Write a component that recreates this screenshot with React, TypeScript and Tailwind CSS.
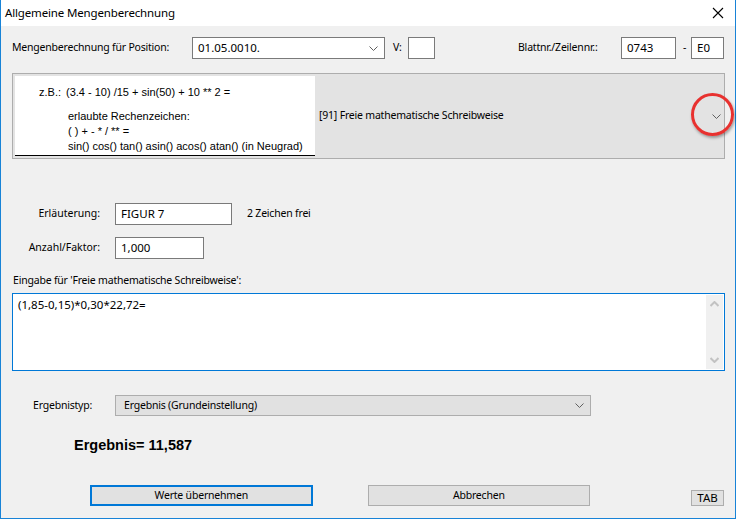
import React from 'react';

function Chevron({ className = '' }: { className?: string }) {
  return (
    <svg width="9" height="5" viewBox="0 0 9 5" className={className}>
      <polyline points="0.5,0.5 4.5,4.5 8.5,0.5" fill="none" stroke="#606060" strokeWidth="1" />
    </svg>
  );
}

function ScrollArrow({ up }: { up?: boolean }) {
  return (
    <svg width="9" height="6" viewBox="0 0 9 6">
      <polyline
        points={up ? '0.5,5 4.5,1 8.5,5' : '0.5,1 4.5,5 8.5,1'}
        fill="none"
        stroke="#c2c2c2"
        strokeWidth="2"
      />
    </svg>
  );
}

function TextBox({ value = '', className = '' }: { value?: string; className?: string }) {
  return (
    <div className={`h-[22px] bg-white border border-[#7a7a7a] pl-[5px] pt-[1px] leading-[18px] text-[11.5px] tracking-normal ${className}`}>
      {value}
    </div>
  );
}

export default function App() {
  return (
    <div className="w-[737px] h-[520px] bg-white font-['Noto_Sans',sans-serif] text-[10.5px] tracking-[-0.2px] text-black">
      <div className="relative w-[736px] h-[519px] border-x border-b border-[#1883d7] flex flex-col">
        {/* Title bar */}
        <div className="h-[26px] bg-white flex items-center justify-between pl-[4px] pr-[11px]">
          <span className="text-[11.5px] tracking-[-0.15px] leading-none">Allgemeine Mengenberechnung</span>
          <svg width="12" height="12" viewBox="0 0 12 12">
            <path d="M1 1 L11 11 M11 1 L1 11" stroke="#000" strokeWidth="1.1" />
          </svg>
        </div>

        {/* Body */}
        <div className="flex-1 bg-[#f0f0f0] px-[11px] flex flex-col">
          {/* Position row */}
          <div className="mt-[11px] h-[22px] flex items-center">
            <span className="w-[180px]">Mengenberechnung für Position:</span>
            <div className="w-[193px] h-[22px] bg-white border border-[#7a7a7a] flex items-center justify-between pl-[5px] pr-[6px] text-[11.5px] tracking-normal">
              <span>01.05.0010.</span>
              <Chevron />
            </div>
            <span className="ml-[8px] w-[15px]">V:</span>
            <TextBox className="w-[27px]" />
            <span className="ml-[83px] w-[103px]">Blattnr./Zeilennr.:</span>
            <TextBox value="0743" className="w-[55px]" />
            <span className="ml-[7px] w-[8px]">-</span>
            <TextBox value="E0" className="w-[33px]" />
          </div>

          {/* Method panel */}
          <div className="relative mt-[14px] h-[86px] w-[713px] border border-[#adadad] bg-[#e3e3e3] p-[2px] flex items-stretch">
            <div className="w-[300px] bg-white border-b border-black pt-[9px] font-['Liberation_Sans',Arial,sans-serif] text-[11px] tracking-normal leading-[14px]">
              <div className="flex">
                <span className="w-[51px] shrink-0 text-right pr-[5px]">z.B.:</span>
                <span>(3.4 - 10) /15 + sin(50) + 10 ** 2 =</span>
              </div>
              <div className="pl-[53px] mt-[10px]">
                <div>erlaubte Rechenzeichen:</div>
                <div className="mt-[1px]">( ) + - * / ** =</div>
                <div className="mt-[1px]">sin() cos() tan() asin() acos() atan() (in Neugrad)</div>
              </div>
            </div>
            <div className="flex-1 flex items-center justify-between pl-[4px] pr-[1px]">
              <span>[91] Freie mathematische Schreibweise</span>
              <Chevron />
            </div>
            <div className="absolute left-[678px] top-[19px] w-[43px] h-[43px] rounded-full border-[3px] border-[#e8312f] shadow-[1px_2px_3px_rgba(0,0,0,0.35)]" />
          </div>

          {/* Erläuterung */}
          <div className="mt-[44px] h-[22px] flex items-center">
            <span className="w-[103px] text-right pr-[15px] tracking-normal">Erläuterung:</span>
            <TextBox value="FIGUR 7" className="w-[117px]" />
            <span className="ml-[15px]">2 Zeichen frei</span>
          </div>

          {/* Anzahl */}
          <div className="mt-[12px] h-[22px] flex items-center">
            <span className="w-[103px] text-right pr-[15px] tracking-normal">Anzahl/Faktor:</span>
            <TextBox value="1,000" className="w-[89px]" />
          </div>

          <div className="mt-[13px] h-[16px] leading-[16px] pl-[1px]">Eingabe für 'Freie mathematische Schreibweise':</div>

          {/* Textarea */}
          <div className="mt-[5px] h-[78px] w-[713px] bg-white border border-[#0078d7] flex">
            <div className="flex-1 pl-[5px] pt-[2px] text-[11.5px] tracking-normal">(1,85-0,15)*0,30*22,72=</div>
            <div className="w-[17px] my-[1px] mr-[1px] bg-[#f0f0f0] flex flex-col items-center justify-between py-[6px]">
              <ScrollArrow up />
              <ScrollArrow />
            </div>
          </div>

          {/* Ergebnistyp */}
          <div className="mt-[24px] h-[21px] flex items-center">
            <span className="w-[103px] pl-[21px]">Ergebnistyp:</span>
            <div className="w-[476px] h-[21px] bg-[#e1e1e1] border border-[#adadad] flex items-center justify-between pl-[8px] pr-[6px]">
              <span>Ergebnis (Grundeinstellung)</span>
              <Chevron />
            </div>
          </div>

          <div className="mt-[19px] h-[20px] leading-[20px] pl-[62px] font-['Liberation_Sans',Arial,sans-serif] font-bold text-[14.5px] tracking-normal">
            Ergebnis= 11,587
          </div>

          {/* Buttons */}
          <div className="mt-[30px] flex items-end">
            <button className="ml-[78px] w-[223px] h-[21px] bg-[#e1e1e1] border-2 border-[#0078d7] leading-none">
              Werte übernehmen
            </button>
            <button className="ml-[55px] w-[223px] h-[21px] bg-[#e1e1e1] border border-[#adadad] leading-none">
              Abbrechen
            </button>
            <button className="ml-[101px] w-[33px] h-[16px] bg-[#e1e1e1] border border-[#adadad] text-[11.5px] tracking-normal leading-none">
              TAB
            </button>
          </div>
        </div>
      </div>
    </div>
  );
}
